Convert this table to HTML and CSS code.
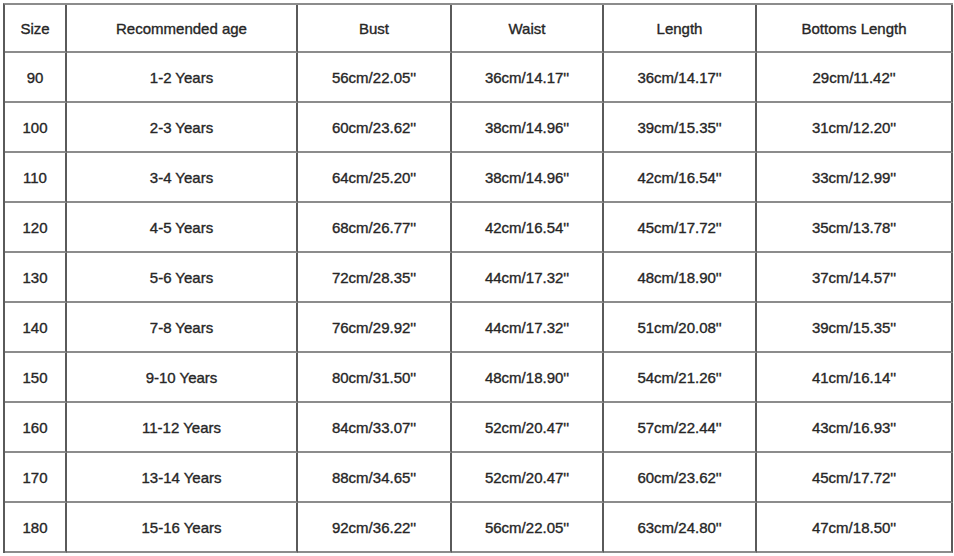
FILE: index.html
```html
<!DOCTYPE html>
<html>
<head>
<meta charset="utf-8">
<link rel="stylesheet" href="styles.css">
</head>
<body>
<div class="chart">
  <div class="cell">Size</div><div class="cell">Recommended age</div><div class="cell">Bust</div><div class="cell">Waist</div><div class="cell">Length</div><div class="cell">Bottoms Length</div>
  <div class="cell">90</div><div class="cell">1-2 Years</div><div class="cell">56cm/22.05''</div><div class="cell">36cm/14.17''</div><div class="cell">36cm/14.17''</div><div class="cell">29cm/11.42''</div>
  <div class="cell">100</div><div class="cell">2-3 Years</div><div class="cell">60cm/23.62''</div><div class="cell">38cm/14.96''</div><div class="cell">39cm/15.35''</div><div class="cell">31cm/12.20''</div>
  <div class="cell">110</div><div class="cell">3-4 Years</div><div class="cell">64cm/25.20''</div><div class="cell">38cm/14.96''</div><div class="cell">42cm/16.54''</div><div class="cell">33cm/12.99''</div>
  <div class="cell">120</div><div class="cell">4-5 Years</div><div class="cell">68cm/26.77''</div><div class="cell">42cm/16.54''</div><div class="cell">45cm/17.72''</div><div class="cell">35cm/13.78''</div>
  <div class="cell">130</div><div class="cell">5-6 Years</div><div class="cell">72cm/28.35''</div><div class="cell">44cm/17.32''</div><div class="cell">48cm/18.90''</div><div class="cell">37cm/14.57''</div>
  <div class="cell">140</div><div class="cell">7-8 Years</div><div class="cell">76cm/29.92''</div><div class="cell">44cm/17.32''</div><div class="cell">51cm/20.08''</div><div class="cell">39cm/15.35''</div>
  <div class="cell">150</div><div class="cell">9-10 Years</div><div class="cell">80cm/31.50''</div><div class="cell">48cm/18.90''</div><div class="cell">54cm/21.26''</div><div class="cell">41cm/16.14''</div>
  <div class="cell">160</div><div class="cell">11-12 Years</div><div class="cell">84cm/33.07''</div><div class="cell">52cm/20.47''</div><div class="cell">57cm/22.44''</div><div class="cell">43cm/16.93''</div>
  <div class="cell">170</div><div class="cell">13-14 Years</div><div class="cell">88cm/34.65''</div><div class="cell">52cm/20.47''</div><div class="cell">60cm/23.62''</div><div class="cell">45cm/17.72''</div>
  <div class="cell">180</div><div class="cell">15-16 Years</div><div class="cell">92cm/36.22''</div><div class="cell">56cm/22.05''</div><div class="cell">63cm/24.80''</div><div class="cell">47cm/18.50''</div>
</div>
</body>
</html>
```
FILE: styles.css
```css
html, body {
  margin: 0;
  padding: 0;
  background: #ffffff;
}
body {
  padding: 3px;
  font-family: "Liberation Sans", Arial, sans-serif;
}
.chart {
  display: grid;
  grid-template-columns: 62px 231px 154px 152px 153px 196px;
  grid-template-rows: 48px repeat(10, 50px);
  width: max-content;
  border-top: 2px solid #8c8c8c;
  border-left: 2px solid #5a5a5a;
}
.cell {
  display: flex;
  align-items: center;
  justify-content: center;
  border-right: 2px solid #5a5a5a;
  border-bottom: 2px solid #8c8c8c;
  font-size: 15px;
  color: #262626;
  -webkit-text-stroke: 0.35px #262626;
}
```
